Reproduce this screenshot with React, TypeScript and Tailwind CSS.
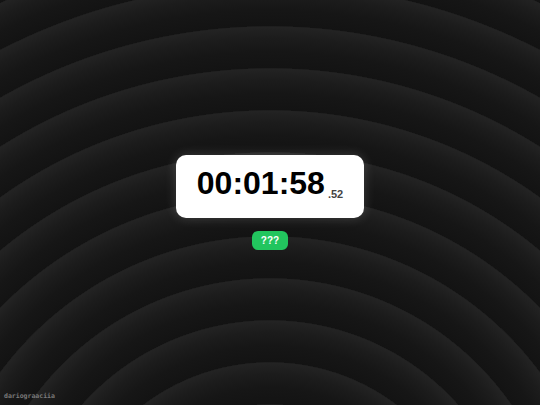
import React from "react";

export default function App() {
  return (
    <div
      className="relative w-full h-screen overflow-hidden flex flex-col items-center justify-center bg-[#181818]"
      style={{
        backgroundImage:
          "repeating-radial-gradient(circle at 50% 572px, #131313 0px, #161616 16px, #1c1c1c 30px, #232323 41px, #1a1a1a 42px)",
      }}
    >
      <div className="flex items-end justify-center w-[188px] h-[63px] pb-[19px] bg-white rounded-[10px] shadow-[0_0_12px_rgba(255,255,255,0.18)] font-['Liberation_Sans',Arial,sans-serif]">
        <span className="text-[32px] leading-none font-bold text-black">
          00:01:58
        </span>
        <span className="ml-[3px] text-[11px] leading-none font-semibold text-[#444] mb-[-1px]">
          .52
        </span>
      </div>
      <button className="mt-[13px] w-[36px] h-[19px] rounded-[6px] bg-[#22c55e] text-white text-[10px] font-bold leading-none font-['Liberation_Sans',Arial,sans-serif]">
        ???
      </button>
      <div className="absolute left-[4px] bottom-[6px] text-[6.5px] leading-none font-bold text-[#7a7a7a] font-['DejaVu_Sans_Mono',monospace]">
        dariograaciia
      </div>
    </div>
  );
}
